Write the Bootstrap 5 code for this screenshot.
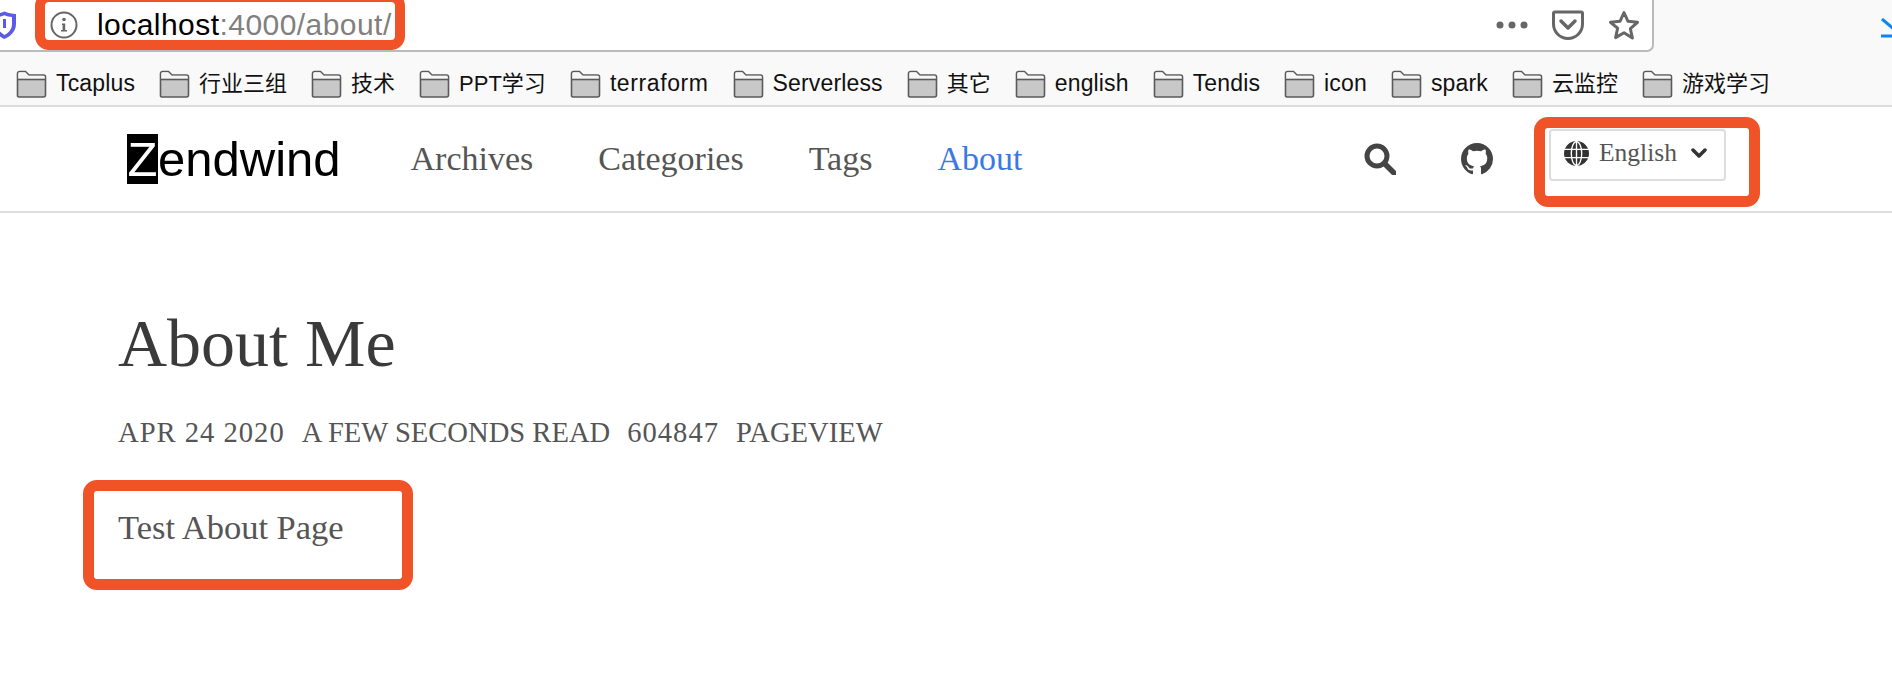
<!DOCTYPE html>
<html lang="en"><head><meta charset="utf-8"><title>About Me</title>
<link href="https://cdn.jsdelivr.net/npm/bootstrap@5.3.0/dist/css/bootstrap.min.css" rel="stylesheet">
<style>
html,body{height:692px;overflow:hidden;background:#fff}
body{font-family:"Liberation Serif",serif;color:#444;position:relative}
.chrome{background:#f9f9f9;border-bottom:2px solid #ddd;height:107px;font-family:"Liberation Sans","Noto Sans CJK SC",sans-serif;color:#111}
.toolbar{width:1654px;height:52px;background:#fff;border-right:2px solid #bbb;border-bottom:2px solid #bbb;border-bottom-right-radius:7px;padding-right:12px}
.shield{margin-left:-9px;margin-right:32px}
.urltext{font-size:30px;letter-spacing:.45px;margin-left:19px;line-height:1;color:#000}
.urlrest{color:#808080}
.dlarrow{position:absolute;left:1881px;top:18px}
.marks{height:53px;padding:10px 0 0 16px;gap:24px;font-size:23px;line-height:27px}
.mark-item{display:flex;gap:9px;align-items:center;white-space:nowrap;letter-spacing:.15px}
.mark-cjk{font-size:22px;letter-spacing:0}
.mark-wide{letter-spacing:.6px}
.sitebar{height:106px;border-bottom:2px solid #ddd;padding:0 0 0 127px}
.logo{font-family:"Liberation Sans",sans-serif;font-size:49px;color:#000;line-height:50px;margin-right:62px;padding:0}
.logo-z{background:#000;color:#fff;display:inline-block;width:31px;text-align:center}
.sitebar .nav-link{font-size:34px;line-height:1.2;color:#555;margin-right:49px}
.sitebar .nav-link.active{color:#3b78e7}
.gh-mark{margin-left:65px}
.lang{width:177px;height:52px;margin-left:56px;margin-right:166px;margin-top:-9px;border:2px solid #ddd;border-radius:4px;background:#fff;font-size:25.5px;color:#555;padding:0 0 3px 13px;gap:10px}
.page-body{padding:0 0 0 118px}
.pg-title{font-family:"Liberation Serif",serif;font-size:68px;font-weight:400;color:#3a3a3a;margin:0;padding-top:91px;line-height:78px}
.pg-meta{font-size:28.600px;line-height:32px;color:#555;margin:0;padding-top:35px;text-transform:uppercase;white-space:pre;gap:17px}
.meta-num{letter-spacing:1px}
.pg-text{font-size:34.500px;line-height:36px;color:#555;margin:0;padding-top:60px}
.note{position:absolute;border:11px solid #f05327;border-radius:14px}
.note-url{left:35px;top:-8px;width:370px;height:58px;border-width:10px}
.note-lang{left:1534px;top:117px;width:226px;height:90px}
.note-text{left:83px;top:480px;width:330px;height:110px}
</style></head>
<body>
<svg width="0" height="0" class="d-block"><defs>
<symbol id="fold" viewBox="0 0 31 28"><path d="M1.500 26V3.500a2 2 0 0 1 2-2h6l3.500 3.500h14.500a2 2 0 0 1 2 2V25a2 2 0 0 1-2 2h-24a2 2 0 0 1-2-1z" fill="#c8c8c8" stroke="#5a5a5a" stroke-width="1.600"/><path d="M2.300 9V3.500a1.200 1.200 0 0 1 1.200-1.200h5.600l3.500 3.500h14.900a1.200 1.200 0 0 1 1.200 1.200V9z" fill="#f6f6f6"/><path d="M2 9.500h27" stroke="#5a5a5a" stroke-width="1.600"/></symbol>
</defs></svg>
<div class="chrome">
 <div class="toolbar d-flex align-items-center">
  <svg class="shield" width="27" height="29" viewBox="0 0 27 29"><path d="M2 3c4 0 8-1 11.500-2.500C17 2 21 3 25 3v10c0 7-5 12-11.500 15C7 25 2 20 2 13z" fill="#5b5be6"/><path d="M6 6c3 0 5-.7 7.500-1.700C16 5.300 18 6 21 6v7c0 5-3 8.500-7.500 11C9 21.500 6 18 6 13z" fill="#fff"/><path d="M12 8h3v9h-3z" fill="#5b5be6"/></svg>
  <svg width="28" height="28" viewBox="0 0 28 28" class="flex-shrink-0"><circle cx="14" cy="14" r="12.500" fill="none" stroke="#666" stroke-width="2"/><circle cx="14" cy="8.500" r="1.800" fill="#666"/><path d="M12 12.500h3.200V19H17v1.500h-6V19h1.600v-5H12z" fill="#666"/></svg>
  <span class="urltext">localhost<span class="urlrest">:4000/about/</span></span>
  <div class="ms-auto d-flex align-items-center gap-4">
   <svg width="32" height="8" viewBox="0 0 32 8"><circle cx="4" cy="4" r="3.500" fill="#666"/><circle cx="16" cy="4" r="3.500" fill="#666"/><circle cx="28" cy="4" r="3.500" fill="#666"/></svg>
   <svg width="32" height="30" viewBox="0 0 32 30"><path d="M3 2h26a1.500 1.500 0 0 1 1.500 1.500V14c0 8-6.500 14.500-14.500 14.500S1.500 22 1.500 14V3.500A1.500 1.500 0 0 1 3 2z" fill="none" stroke="#666" stroke-width="3"/><path d="M9 11l7 7 7-7" fill="none" stroke="#666" stroke-width="3.500" stroke-linecap="round" stroke-linejoin="round"/></svg>
   <svg width="32" height="31" viewBox="0 0 32 31"><path d="M16 2.500l4 8.800 9.500 1-7.100 6.400 2 9.400L16 22.800l-8.400 4.800 2-9.400L2.500 12.300l9.500-1z" fill="none" stroke="#666" stroke-width="3" stroke-linejoin="round"/></svg>
  </div>
 </div>
 <svg class="dlarrow" width="22" height="20" viewBox="0 0 22 20"><path d="M1 1l14 12" stroke="#0a84ff" stroke-width="3" fill="none"/><path d="M0 18h22" stroke="#0a84ff" stroke-width="3"/></svg>
 <div class="marks d-flex">
  <div class="mark-item"><svg width="31" height="28"><use href="#fold"/></svg>Tcaplus</div>
  <div class="mark-item mark-cjk"><svg width="31" height="28"><use href="#fold"/></svg>行业三组</div>
  <div class="mark-item mark-cjk"><svg width="31" height="28"><use href="#fold"/></svg>技术</div>
  <div class="mark-item mark-cjk"><svg width="31" height="28"><use href="#fold"/></svg>PPT学习</div>
  <div class="mark-item mark-wide"><svg width="31" height="28"><use href="#fold"/></svg>terraform</div>
  <div class="mark-item"><svg width="31" height="28"><use href="#fold"/></svg>Serverless</div>
  <div class="mark-item mark-cjk"><svg width="31" height="28"><use href="#fold"/></svg>其它</div>
  <div class="mark-item"><svg width="31" height="28"><use href="#fold"/></svg>english</div>
  <div class="mark-item"><svg width="31" height="28"><use href="#fold"/></svg>Tendis</div>
  <div class="mark-item"><svg width="31" height="28"><use href="#fold"/></svg>icon</div>
  <div class="mark-item"><svg width="31" height="28"><use href="#fold"/></svg>spark</div>
  <div class="mark-item mark-cjk"><svg width="31" height="28"><use href="#fold"/></svg>云监控</div>
  <div class="mark-item mark-cjk"><svg width="31" height="28"><use href="#fold"/></svg>游戏学习</div>
 </div>
</div>
<nav class="navbar navbar-expand sitebar">
 <a class="navbar-brand logo" href="#"><span class="logo-z">Z</span>endwind</a>
 <ul class="navbar-nav">
  <li class="nav-item"><a class="nav-link" href="#">Archives</a></li>
  <li class="nav-item"><a class="nav-link" href="#">Categories</a></li>
  <li class="nav-item"><a class="nav-link" href="#">Tags</a></li>
  <li class="nav-item"><a class="nav-link active" href="#">About</a></li>
 </ul>
 <div class="ms-auto d-flex align-items-center">
  <svg width="32" height="32" viewBox="0 0 32 32"><circle cx="13" cy="13" r="10" fill="none" stroke="#444" stroke-width="5"/><path d="M21 21l9 9" stroke="#444" stroke-width="5.500" stroke-linecap="round"/></svg>
  <svg class="gh-mark" width="32" height="32" viewBox="0 0 16 16"><path fill="#444" d="M8 0C3.580 0 0 3.580 0 8c0 3.540 2.290 6.530 5.470 7.590.4.070.55-.17.55-.38 0-.19-.01-.82-.01-1.490-2.010.37-2.530-.49-2.690-.94-.09-.23-.48-.94-.82-1.130-.28-.15-.68-.52-.01-.53.63-.01 1.080.58 1.230.82.720 1.210 1.870.87 2.330.66.070-.52.280-.87.510-1.070-1.780-.2-3.640-.89-3.640-3.950 0-.87.310-1.590.82-2.150-.08-.2-.36-1.020.08-2.120 0 0 .67-.21 2.200.82.640-.18 1.320-.27 2-.27s1.360.09 2 .27c1.530-1.040 2.200-.82 2.200-.82.440 1.100.16 1.920.08 2.120.51.560.82 1.270.82 2.150 0 3.070-1.870 3.750-3.650 3.950.29.250.54.730.54 1.480 0 1.070-.01 1.930-.01 2.200 0 .21.150.46.55.38A8.010 8.010 0 0 0 16 8c0-4.420-3.580-8-8-8z"/></svg>
  <div class="lang d-flex align-items-center">
   <svg width="25" height="25" viewBox="0 0 24 24" class="flex-shrink-0"><circle cx="12" cy="12" r="12" fill="#333"/><g fill="none" stroke="#fff" stroke-width="1.300"><ellipse cx="12" cy="12" rx="5" ry="11.500"/><path d="M0 8h24M0 16h24M12 0v24"/></g></svg>
   <span>English</span>
   <svg width="16" height="11" viewBox="0 0 16 11" class="ms-1"><path d="M2 2l6 6 6-6" fill="none" stroke="#333" stroke-width="3.500" stroke-linecap="round" stroke-linejoin="round"/></svg>
  </div>
 </div>
</nav>
<main class="page-body">
 <h1 class="pg-title">About Me</h1>
 <div class="pg-meta d-flex"><span class="meta-num">Apr 24 2020</span><span>A few seconds read</span><span class="meta-num">604847</span><span>Pageview</span></div>
 <p class="pg-text">Test About Page</p>
</main>
<div class="note note-url"></div>
<div class="note note-lang"></div>
<div class="note note-text"></div>
</body></html>
